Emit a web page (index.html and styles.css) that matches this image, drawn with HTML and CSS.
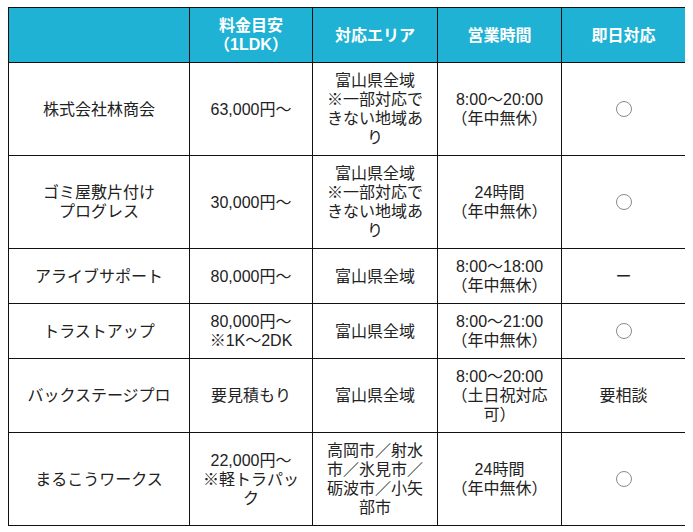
FILE: index.html
```html
<!DOCTYPE html>
<html lang="ja">
<head>
<meta charset="utf-8">
<title>比較表</title>
<link rel="stylesheet" href="styles.css">
</head>
<body>
<table class="compare">
  <colgroup>
    <col class="c-name">
    <col class="c-price">
    <col class="c-area">
    <col class="c-hours">
    <col class="c-same">
  </colgroup>
  <thead>
    <tr>
      <th></th>
      <th>料金目安（1LDK）</th>
      <th>対応エリア</th>
      <th>営業時間</th>
      <th>即日対応</th>
    </tr>
  </thead>
  <tbody>
    <tr>
      <td>株式会社林商会</td>
      <td>63,000円～</td>
      <td>富山県全域<br>※一部対応できない地域あり</td>
      <td>8:00～20:00（年中無休）</td>
      <td><span class="circle" aria-label="○"></span></td>
    </tr>
    <tr>
      <td>ゴミ屋敷片付け<br>プログレス</td>
      <td>30,000円～</td>
      <td>富山県全域<br>※一部対応できない地域あり</td>
      <td>24時間<br>（年中無休）</td>
      <td><span class="circle" aria-label="○"></span></td>
    </tr>
    <tr>
      <td>アライブサポート</td>
      <td>80,000円～</td>
      <td>富山県全域</td>
      <td>8:00～18:00（年中無休）</td>
      <td>ー</td>
    </tr>
    <tr>
      <td>トラストアップ</td>
      <td>80,000円～<br>※1K～2DK</td>
      <td>富山県全域</td>
      <td>8:00～21:00（年中無休）</td>
      <td><span class="circle" aria-label="○"></span></td>
    </tr>
    <tr>
      <td>バックステージプロ</td>
      <td>要見積もり</td>
      <td>富山県全域</td>
      <td>8:00～20:00（土日祝対応可）</td>
      <td>要相談</td>
    </tr>
    <tr>
      <td>まるこうワークス</td>
      <td>22,000円～<br>※軽トラパック</td>
      <td>高岡市／射水市／氷見市／砺波市／小矢部市</td>
      <td>24時間<br>（年中無休）</td>
      <td><span class="circle" aria-label="○"></span></td>
    </tr>
  </tbody>
</table>
</body>
</html>
```

FILE: styles.css
```css
html, body {
  background: #ffffff;
}
body {
  margin: 7px 8px;
  font-family: "Liberation Sans", "Noto Sans CJK JP", sans-serif;
  font-size: 16px;
  line-height: 19px;
  color: #222222;
}
.compare {
  border-collapse: collapse;
  table-layout: fixed;
  width: 677px;
}
.c-name { width: 181px; }
.c-price { width: 123px; }
.c-area { width: 125px; }
.c-hours { width: 124px; }
.c-same { width: 124px; }
.compare th,
.compare td {
  border: 1px solid #111111;
  padding: 8px 8px;
  text-align: center;
  vertical-align: middle;
  word-break: normal;
  line-break: strict;
}
.compare th {
  background: #20b2d4;
  color: #ffffff;
  font-weight: bold;
}
.circle {
  display: inline-block;
  width: 14px;
  height: 14px;
  border: 1px solid #8a8a8a;
  border-radius: 50%;
  vertical-align: -2px;
}
```
